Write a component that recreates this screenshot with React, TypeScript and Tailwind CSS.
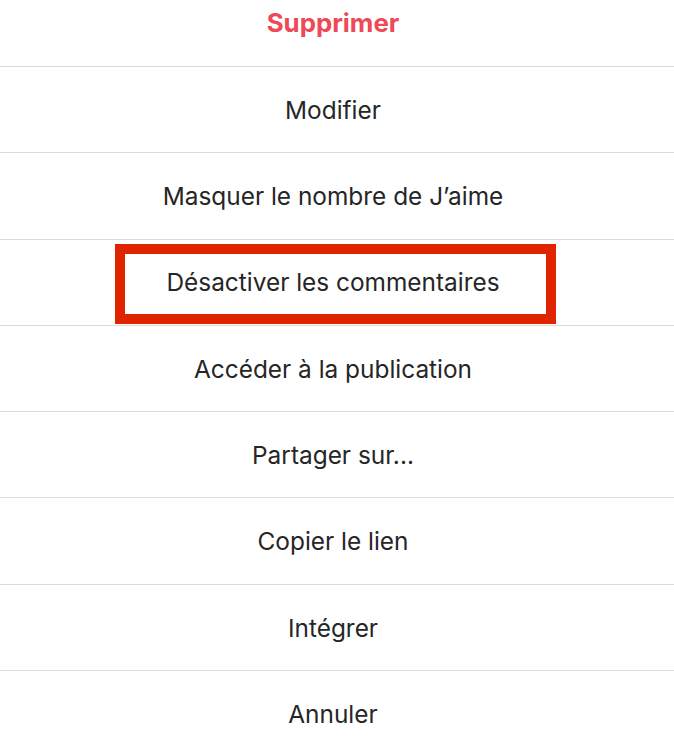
const items = [
  "Modifier",
  "Masquer le nombre de J’aime",
  "Désactiver les commentaires",
  "Accéder à la publication",
  "Partager sur...",
  "Copier le lien",
  "Intégrer",
  "Annuler",
];

export default function App() {
  return (
    <div
      className="h-[742px] w-[674px] overflow-hidden bg-white text-[#262626]"
      style={{ fontFamily: "Inter, 'Noto Sans', sans-serif" }}
    >
      <div className="-mt-[19.3px] flex flex-col">
        <button className="flex h-[86.3px] w-full items-center justify-center border-b border-[#dbdbdb] pr-2 text-[25.8px] font-bold text-[#ed4956]">
          Supprimer
        </button>
        {items.map((label, i) => (
          <div
            key={label}
            className="relative flex h-[86.3px] w-full items-center justify-center border-b border-[#dbdbdb] pr-2 pt-[1px] text-[24.4px]"
          >
            {i === 2 && (
              <div className="pointer-events-none absolute left-[115px] top-[4.4px] h-[80px] w-[441px] border-[10px] border-[#e12400]" />
            )}
            <span className="relative">{label}</span>
          </div>
        ))}
      </div>
    </div>
  );
}
